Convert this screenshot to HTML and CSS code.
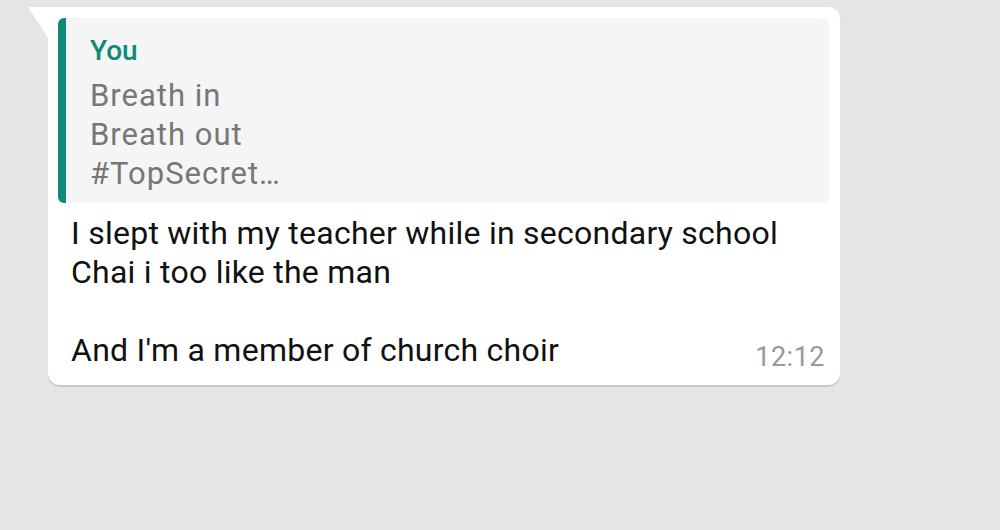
FILE: index.html
```html
<!DOCTYPE html>
<html>
<head>
<meta charset="utf-8">
<link rel="stylesheet" href="styles.css">
</head>
<body>
<div class="chat">
  <div class="bubble">
    <span class="tail"></span>
    <div class="quote">
      <div class="quote-author">You</div>
      <div class="quote-text">Breath in<br>Breath out<br>#TopSecret…</div>
    </div>
    <div class="message">
      <div class="message-text">I slept with my teacher while in secondary school<br>Chai i too like the man<br><br>And I'm a member of church choir</div>
      <span class="time">12:12</span>
    </div>
  </div>
</div>
</body>
</html>
```

FILE: styles.css
```css
html, body {
  margin: 0;
  padding: 0;
}
body {
  background: #e5e5e5;
  width: 1000px;
  height: 530px;
  overflow: hidden;
  font-family: Roboto, "Noto Sans", sans-serif;
}
.chat {
  padding: 7px 0 0 48px;
}
.bubble {
  position: relative;
  width: 792px;
  height: 378px;
  box-sizing: border-box;
  background: #ffffff;
  border-radius: 0 12px 12px 12px;
  padding: 11px 11px 0 10px;
  box-shadow: 0 2px 1px rgba(0, 0, 0, 0.12);
}
.tail {
  position: absolute;
  left: -20px;
  top: 0;
  width: 20px;
  height: 31px;
  background: #ffffff;
  clip-path: polygon(0 0, 100% 0, 100% 100%);
  border-top-left-radius: 3px;
}
.quote {
  background: #f5f5f5;
  border-left: 8px solid #0f8a78;
  border-radius: 6px;
  padding: 16px 20px 0 24px;
  height: 185px;
  box-sizing: border-box;
}
.quote-author {
  color: #0f8a78;
  font-size: 28px;
  font-weight: 500;
  line-height: 34px;
  margin-bottom: 8px;
}
.quote-text {
  color: #777777;
  font-size: 31px;
  line-height: 39px;
  letter-spacing: 1px;
}
.message {
  display: flex;
  justify-content: space-between;
  align-items: flex-end;
  padding: 11px 4px 0 13px;
}
.message-text {
  flex: 1 1 auto;
  min-width: 0;
  color: #111111;
  font-size: 32px;
  line-height: 39px;
  letter-spacing: 0.25px;
  white-space: nowrap;
}
.time {
  flex-shrink: 0;
  color: #999999;
  font-size: 27px;
  line-height: 27px;
  letter-spacing: 0.5px;
  margin-bottom: -1px;
}
```
